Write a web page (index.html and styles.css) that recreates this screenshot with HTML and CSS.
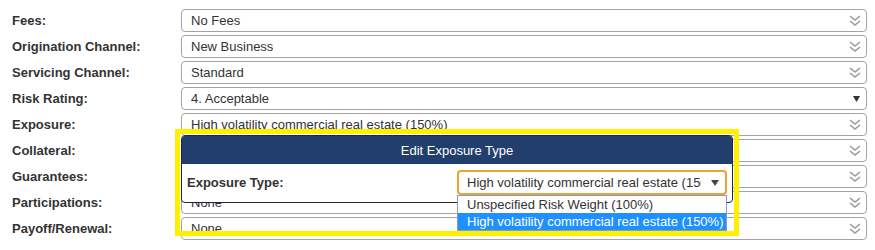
FILE: index.html
```html
<!DOCTYPE html>
<html>
<head>
<meta charset="utf-8">
<link rel="stylesheet" href="styles.css">
</head>
<body>
<div class="form">
  <div class="row"><div class="label">Fees:</div><div class="select"><span class="val">No Fees</span><svg class="chev" width="12" height="11" viewBox="0 0 12 11"><path d="M1 1 L6 5 L11 1 M1 6 L6 10 L11 6"/></svg></div></div>
  <div class="row"><div class="label">Origination Channel:</div><div class="select"><span class="val">New Business</span><svg class="chev" width="12" height="11" viewBox="0 0 12 11"><path d="M1 1 L6 5 L11 1 M1 6 L6 10 L11 6"/></svg></div></div>
  <div class="row"><div class="label">Servicing Channel:</div><div class="select"><span class="val">Standard</span><svg class="chev" width="12" height="11" viewBox="0 0 12 11"><path d="M1 1 L6 5 L11 1 M1 6 L6 10 L11 6"/></svg></div></div>
  <div class="row"><div class="label">Risk Rating:</div><div class="select"><span class="val">4. Acceptable</span><svg class="tri" width="7" height="6" viewBox="0 0 7 6"><polygon points="0,0 7,0 3.5,6"/></svg></div></div>
  <div class="row"><div class="label">Exposure:</div><div class="select"><span class="val">High volatility commercial real estate (150%)</span><svg class="chev" width="12" height="11" viewBox="0 0 12 11"><path d="M1 1 L6 5 L11 1 M1 6 L6 10 L11 6"/></svg></div></div>
  <div class="row"><div class="label">Collateral:</div><div class="select"><span class="val">None</span><svg class="chev" width="12" height="11" viewBox="0 0 12 11"><path d="M1 1 L6 5 L11 1 M1 6 L6 10 L11 6"/></svg></div></div>
  <div class="row"><div class="label">Guarantees:</div><div class="select"><span class="val">None</span><svg class="chev" width="12" height="11" viewBox="0 0 12 11"><path d="M1 1 L6 5 L11 1 M1 6 L6 10 L11 6"/></svg></div></div>
  <div class="row"><div class="label">Participations:</div><div class="select"><span class="val">None</span><svg class="chev" width="12" height="11" viewBox="0 0 12 11"><path d="M1 1 L6 5 L11 1 M1 6 L6 10 L11 6"/></svg></div></div>
  <div class="row"><div class="label">Payoff/Renewal:</div><div class="select"><span class="val">None</span><svg class="chev" width="12" height="11" viewBox="0 0 12 11"><path d="M1 1 L6 5 L11 1 M1 6 L6 10 L11 6"/></svg></div></div>
</div>

<div class="dialog">
  <div class="dialog-head">Edit Exposure Type</div>
  <div class="dialog-body">
    <div class="dlabel">Exposure Type:</div>
    <div class="dselect">
      <span class="dval">High volatility commercial real estate (150%)</span>
      <svg class="tri" width="8" height="6" viewBox="0 0 8 6"><polygon points="0,0 8,0 4,6"/></svg>
    </div>
  </div>
</div>

<div class="options">
  <div class="opt">Unspecified Risk Weight (100%)</div>
  <div class="opt sel">High volatility commercial real estate (150%)</div>
</div>

<div class="highlight"></div>
</body>
</html>
```

FILE: styles.css
```css
html, body {
  margin: 0;
  padding: 0;
  background: #fff;
}
body {
  font-family: "Liberation Sans", Arial, sans-serif;
  font-size: 13px;
  color: #333;
  width: 875px;
  height: 250px;
  overflow: hidden;
  position: relative;
}
.form {
  padding: 9px 8px 0 12px;
  display: flex;
  flex-direction: column;
  gap: 3px;
}
.row {
  display: flex;
  align-items: center;
  height: 23px;
}
.label {
  width: 169px;
  flex: none;
  font-weight: bold;
  color: #333;
}
.select {
  box-sizing: border-box;
  width: 686px;
  height: 23px;
  border: 1px solid #a3a3a3;
  border-radius: 4px;
  display: flex;
  align-items: center;
  justify-content: space-between;
  padding: 0 5px 0 9px;
  background: #fff;
}
.val {
  white-space: nowrap;
  color: #333;
}
.chev path {
  fill: none;
  stroke: #9a9a9a;
  stroke-width: 1.6;
}
.tri polygon {
  fill: #333;
}
.select .tri {
  margin-right: 1px;
}

.dialog {
  position: absolute;
  left: 181px;
  top: 135px;
  width: 552px;
  height: 68px;
  box-sizing: border-box;
  border: 1px solid #1e2a3c;
  border-radius: 4px;
  background: #fff;
  overflow: hidden;
  display: flex;
  flex-direction: column;
}
.dialog-head {
  height: 28px;
  background: #223e6c;
  color: #fff;
  display: flex;
  align-items: center;
  justify-content: center;
  flex: none;
}
.dialog-body {
  flex: 1;
  display: flex;
  align-items: flex-start;
  padding: 6px 0 0 5px;
}
.dlabel {
  font-weight: bold;
  color: #333;
  width: 270px;
  flex: none;
  line-height: 25px;
}
.dselect {
  box-sizing: border-box;
  width: 270px;
  height: 25px;
  border: 2px solid #f0a233;
  border-radius: 4px;
  display: flex;
  align-items: center;
  padding: 0 6px 0 8px;
  gap: 10px;
}
.dval {
  white-space: nowrap;
  overflow: hidden;
  flex: 1;
  color: #333;
}
.dselect .tri polygon {
  fill: #444;
}

.options {
  position: absolute;
  left: 457px;
  top: 195px;
  width: 270px;
  box-sizing: border-box;
  border: 1px solid #7f9dcc;
  background: #fff;
}
.opt {
  height: 17px;
  line-height: 17px;
  padding-left: 9px;
  white-space: nowrap;
  color: #333;
}
.opt.sel {
  background: #1e90ff;
  color: #fff;
}

.highlight {
  position: absolute;
  left: 175px;
  top: 129px;
  width: 564px;
  height: 107px;
  box-sizing: border-box;
  border: 5px solid #fff000;
  pointer-events: none;
}
```
